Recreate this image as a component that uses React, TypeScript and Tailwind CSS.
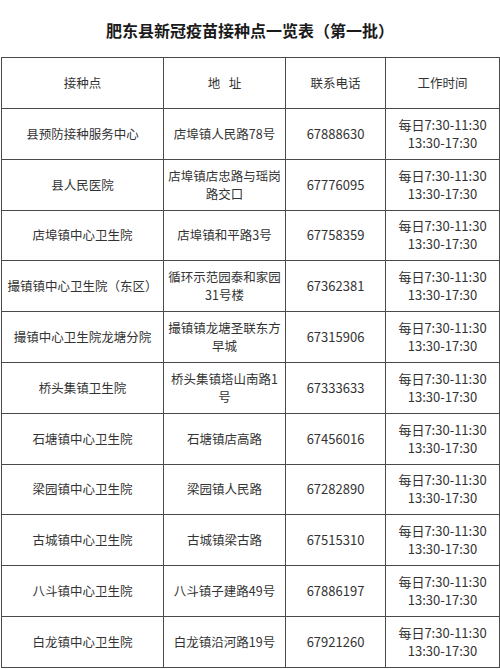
import React from 'react';

const rows = [
  { name: '县预防接种服务中心', addr: ['店埠镇人民路78号'], tel: '67888630' },
  { name: '县人民医院', addr: ['店埠镇店忠路与瑶岗', '路交口'], tel: '67776095' },
  { name: '店埠镇中心卫生院', addr: ['店埠镇和平路3号'], tel: '67758359' },
  { name: '撮镇镇中心卫生院（东区）', addr: ['循环示范园泰和家园', '31号楼'], tel: '67362381' },
  { name: '撮镇中心卫生院龙塘分院', addr: ['撮镇镇龙塘圣联东方', '早城'], tel: '67315906' },
  { name: '桥头集镇卫生院', addr: ['桥头集镇塔山南路1', '号'], tel: '67333633' },
  { name: '石塘镇中心卫生院', addr: ['石塘镇店高路'], tel: '67456016' },
  { name: '梁园镇中心卫生院', addr: ['梁园镇人民路'], tel: '67282890' },
  { name: '古城镇中心卫生院', addr: ['古城镇梁古路'], tel: '67515310' },
  { name: '八斗镇中心卫生院', addr: ['八斗镇子建路49号'], tel: '67886197' },
  { name: '白龙镇中心卫生院', addr: ['白龙镇沿河路19号'], tel: '67921260' },
];

const cell = 'border border-[#4a4a4a] text-center align-middle p-0 whitespace-nowrap overflow-hidden';

export default function App() {
  return (
    <div className="w-[500px] h-[669px] bg-white overflow-hidden text-[#333] font-['Microsoft_YaHei','Noto_Sans_CJK_SC',sans-serif]">
      <div className="h-[57px] flex items-center justify-center pt-[2px]">
        <h1 className="text-[16px] font-bold text-[#1a1a1a]">肥东县新冠疫苗接种点一览表（第一批）</h1>
      </div>
      <table className="ml-[1px] w-[498px] border-collapse table-fixed text-[12.5px] leading-[18px]">
        <colgroup>
          <col className="w-[162px]" />
          <col className="w-[122px]" />
          <col className="w-[100px]" />
          <col className="w-[114px]" />
        </colgroup>
        <thead>
          <tr className="h-[51px]">
            <th className={`${cell} font-normal`}>接种点</th>
            <th className={`${cell} font-normal whitespace-pre`}>地   址</th>
            <th className={`${cell} font-normal`}>联系电话</th>
            <th className={`${cell} font-normal`}>工作时间</th>
          </tr>
        </thead>
        <tbody>
          {rows.map((r, i) => (
            <tr key={i} className="h-[50.8px]">
              <td className={cell}>{r.name}</td>
              <td className={cell}>
                {r.addr.map((a, j) => (
                  <div key={j}>{a}</div>
                ))}
              </td>
              <td className={`${cell} text-[13px]`}>{r.tel}</td>
              <td className={`${cell} text-[13px]`}>
                <div>每日7:30-11:30</div>
                <div>13:30-17:30</div>
              </td>
            </tr>
          ))}
        </tbody>
      </table>
    </div>
  );
}
